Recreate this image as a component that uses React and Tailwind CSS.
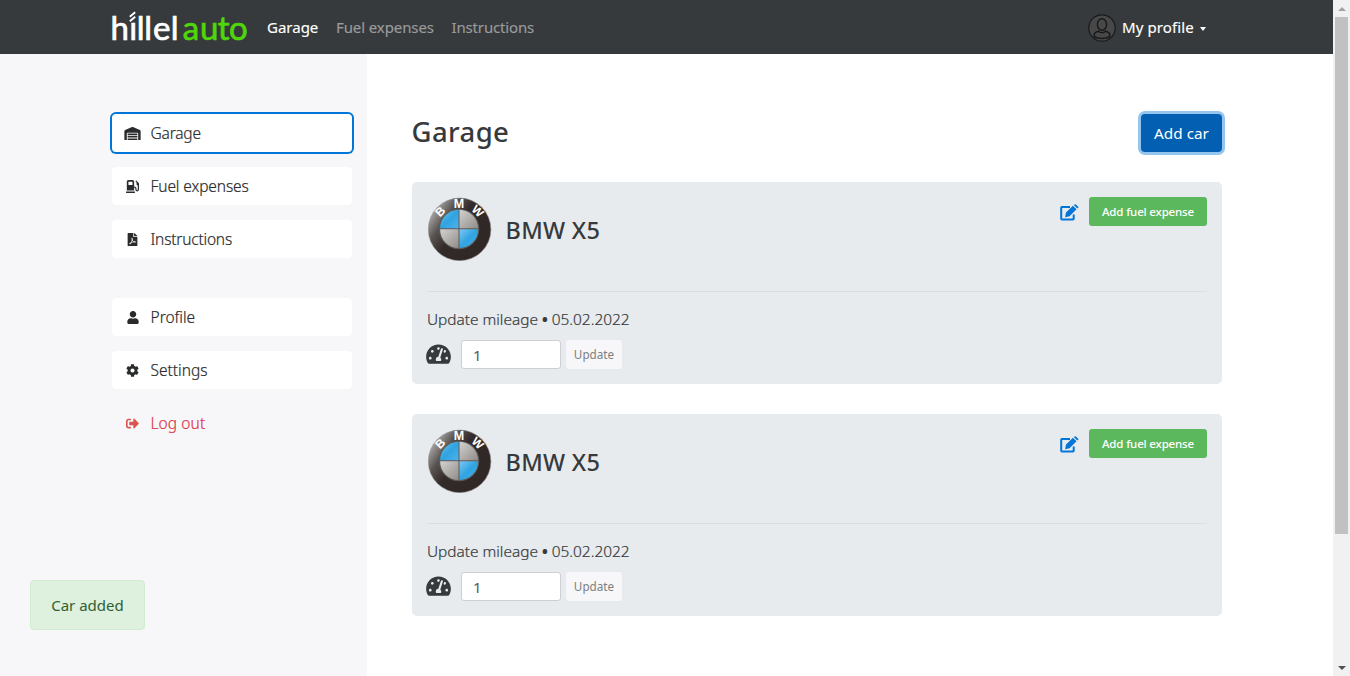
import React from "react";
import { FaWarehouse, FaGasPump, FaFilePdf, FaUser, FaCog, FaSignOutAlt, FaTachometerAlt } from "react-icons/fa";

function Logo() {
  return (
    <svg width="144" height="50" viewBox="0 0 144 50" className="block" fontFamily="Lato, sans-serif" fontSize="33" strokeWidth="0.7">
      <text x="1.5 20.2 27.7 35.3 44.1 61.7" y="38.3" fill="#fff" stroke="#fff">hıllel</text>
      <path d="M20.8 14.7 L26.2 10.2 M20.8 19.2 L26.2 14.7" stroke="#fff" strokeWidth="1.9" fill="none" />
      <text x="73.8 91 108.8 120" y="38.3" fill="#4fd70a" stroke="#4fd70a">auto</text>
    </svg>
  );
}

function Avatar() {
  return (
    <svg width="28" height="28" viewBox="0 0 28 28" fill="none" stroke="#17191a" strokeWidth="1.2" className="mt-px">
      <circle cx="14" cy="14" r="13.2" fill="#484848" />
      <ellipse cx="14" cy="10.5" rx="4.6" ry="5.8" strokeWidth="1.5" />
      <path d="M10.6 17.2C7.5 18 6 19.6 6 21.3C6 23 9.5 24.4 14 24.4C18.5 24.4 22 23 22 21.3C22 19.6 20.5 18 17.4 17.2C15.5 19 12.5 19 10.6 17.2Z" strokeWidth="1.5" />
    </svg>
  );
}

function Emblem() {
  return (
    <svg width="64" height="64" viewBox="0 0 64 64" className="block">
      <defs>
        <linearGradient id="rim" x1="0" y1="0.25" x2="0.75" y2="0.75">
          <stop offset="0" stopColor="#b5b2b0" />
          <stop offset="0.3" stopColor="#575250" />
          <stop offset="0.55" stopColor="#332b29" />
          <stop offset="1" stopColor="#302827" />
        </linearGradient>
        <linearGradient id="sky" x1="0" y1="0" x2="1" y2="1">
          <stop offset="0" stopColor="#7cc8f2" />
          <stop offset="0.5" stopColor="#2fa3e2" />
          <stop offset="1" stopColor="#4db2ea" />
        </linearGradient>
        <linearGradient id="steel" x1="0" y1="0" x2="1" y2="1">
          <stop offset="0" stopColor="#d4d2d0" />
          <stop offset="1" stopColor="#8f8c8a" />
        </linearGradient>
      </defs>
      <circle cx="31.6" cy="32.4" r="31.3" fill="url(#rim)" stroke="#918d8b" strokeWidth="0.6" />
      <circle cx="31" cy="32" r="20.3" fill="#5d5957" />
      <path d="M30.5 31.3V12.8A18.9 18.9 0 0 0 12.1 31.3Z" fill="url(#sky)" />
      <path d="M31.5 32.3V51.1A18.9 18.9 0 0 0 50.1 32.3Z" fill="url(#sky)" />
      <path d="M31.5 31.3V12.8A18.9 18.9 0 0 1 50.1 31.3Z" fill="url(#steel)" />
      <path d="M30.5 32.3V51.1A18.9 18.9 0 0 1 12.1 32.3Z" fill="url(#steel)" />
      <g fill="#fff" fontFamily="Liberation Sans, sans-serif" fontWeight="700" textAnchor="middle">
        <text transform="translate(15 17.4) rotate(-45)" fontSize="12">B</text>
        <text x="31" y="10.8" fontSize="12.5">M</text>
        <text transform="translate(46.8 17.1) rotate(43)" fontSize="12">W</text>
      </g>
    </svg>
  );
}

function EditIcon() {
  return (
    <svg width="19" height="17" viewBox="0 0 19 17" className="mt-px block">
      <path d="M10 2.9H2Q1.2 2.9 1.2 3.7V14.8Q1.2 15.6 2 15.6H12.9Q13.7 15.6 13.7 14.8V10.5" fill="none" stroke="#0275d8" strokeWidth="2" />
      <path d="M12.9 1.7L16.5 5.3L9.5 12.3L5.1 13.3L6 8.6Z M13.8 1L14.6 0.4Q15.3 -0.1 15.9 0.4L18.2 2.8Q18.7 3.3 18.2 3.8L17.3 4.6Z" fill="#0275d8" />
    </svg>
  );
}

function SideItem({ icon: Icon, label, active, className, iconClass }) {
  return (
    <a className={"flex h-[38px] items-center rounded-[4px] bg-white pl-[12px] text-[#292b2c] " + (active ? "ring-2 ring-[#0275d8] " : "")}>
      <span className="flex w-[17px] justify-center"><Icon className={iconClass} /></span>
      <span className={"ml-[9.5px] text-[15.5px] leading-6 font-light [-webkit-text-stroke:0.2px] " + className}>{label}</span>
    </a>
  );
}

function CarCard() {
  return (
    <section className="flex h-[202px] flex-col rounded-[5px] bg-[#e7ebee] px-[15px] pt-[15px]">
      <div className="flex h-[95px] items-start border-b border-[#dadee1] pl-px">
        <Emblem />
        <h2 className="mt-[16px] ml-[13.5px] text-[23.5px] leading-[34px] font-medium tracking-[0.3px]">BMW X5</h2>
        <div className="ml-auto flex items-center">
          <EditIcon />
          <button className="ml-[10px] h-[29px] w-[118px] rounded-[3px] bg-[#5cb85c] text-[11.5px] font-medium tracking-[-0.16px] text-white">Add fuel expense</button>
        </div>
      </div>
      <p className="mt-[16px] text-[15.4px] leading-6 font-light [-webkit-text-stroke:0.2px]">
        Update mileage <span className="font-bold">•</span> 05.02.2022
      </p>
      <div className="mt-[8px] flex items-center">
        <FaTachometerAlt className="-mt-px ml-[-1px] h-[22px] w-[25px]" />
        <input defaultValue="1" className="ml-[10px] h-[29px] w-[100px] rounded-[3px] border border-[#ccd0d4] bg-white px-[11px] text-[15px] font-normal text-[#55595c] outline-none" />
        <button className="ml-[5px] h-[29px] w-[56px] rounded-[3px] bg-[#f7f7f9] text-[11.7px] text-[#7d7f81]">Update</button>
      </div>
    </section>
  );
}

export default function App() {
  return (
    <div className="relative flex h-[676px] w-[1350px] overflow-hidden bg-white font-['Noto_Sans',sans-serif] text-[#373a3c]">
      <div className="flex w-[1333px] flex-col">
        <header className="flex h-[54px] items-center bg-[#373a3c] pl-[109px] text-[15px] font-normal text-[#999b9c] [-webkit-text-stroke:0.15px]">
          <Logo />
          <nav className="ml-[14px] flex">
            <a className="w-[69px] text-white">Garage</a>
            <a className="w-[115.5px] tracking-[-0.1px]">Fuel expenses</a>
            <a className="tracking-[-0.15px]">Instructions</a>
          </nav>
          <div className="mr-[127px] ml-auto flex items-center text-white">
            <Avatar />
            <span className="ml-[6px] w-[72px] tracking-[0.1px] whitespace-nowrap">My profile</span>
            <svg width="6" height="4" className="mt-[3px] ml-[6px]"><path d="M0 0H6L3 4Z" fill="#fff" /></svg>
          </div>
        </header>
        <div className="flex flex-1">
          <aside className="flex w-[367px] flex-col gap-[15px] bg-[#f7f7f9] pt-[60px] pr-[15px] pl-[112px]">
            <SideItem icon={FaWarehouse} label="Garage" active className="tracking-[-0.2px]" iconClass="h-[13px] w-[17px]" />
            <SideItem icon={FaGasPump} label="Fuel expenses" className="tracking-[-0.1px]" iconClass="h-[13px] w-[13px]" />
            <SideItem icon={FaFilePdf} label="Instructions" className="tracking-[-0.2px]" iconClass="h-[13px] w-[11px]" />
            <div className="mt-[25px]">
              <SideItem icon={FaUser} label="Profile" className="" iconClass="h-[13px] w-[12px]" />
            </div>
            <SideItem icon={FaCog} label="Settings" className="" iconClass="h-[13px] w-[13px]" />
            <a className="flex h-[38px] items-center pl-[12px] text-[#dc3545]">
              <span className="flex w-[17px] justify-center"><FaSignOutAlt className="h-[13px] w-[13px] text-[#d9534f]" /></span>
              <span className="ml-[9.5px] text-[15.5px] leading-6 font-light tracking-[0.1px] [-webkit-text-stroke:0.2px]">Log out</span>
            </a>
          </aside>
          <main className="flex w-[855px] flex-col pt-[60px] pl-[45px]">
            <div className="flex h-[38px] items-center justify-between">
              <h1 className="-mt-[2px] -ml-[0.5px] text-[27.5px] leading-[34px] font-medium tracking-[0.4px]">Garage</h1>
              <button className="h-[38px] w-[81px] rounded-[4px] bg-[#025fb1] text-[15.3px] font-normal text-white ring-3 ring-[#93c5ee]">Add car</button>
            </div>
            <div className="mt-[30px] flex flex-col gap-[30px]">
              <CarCard />
              <CarCard />
            </div>
          </main>
        </div>
      </div>
      <div className="flex w-[17px] flex-col items-center bg-[#f1f1f1]">
        <div className="flex h-[17px] items-center"><svg width="8" height="4"><path d="M0 4H8L4 0Z" fill="#a3a3a3" /></svg></div>
        <div className="h-[517px] w-[13px] bg-[#c1c1c1]" />
        <div className="mt-auto flex h-[17px] items-center"><svg width="8" height="4"><path d="M0 0H8L4 4Z" fill="#505050" /></svg></div>
      </div>
      <div className="absolute top-[580px] left-[30px] flex h-[50px] w-[115px] items-center justify-center rounded-[4px] border border-[#d1ebd1] bg-[#def1de] text-[15px] text-[#306030]">Car added</div>
    </div>
  );
}
